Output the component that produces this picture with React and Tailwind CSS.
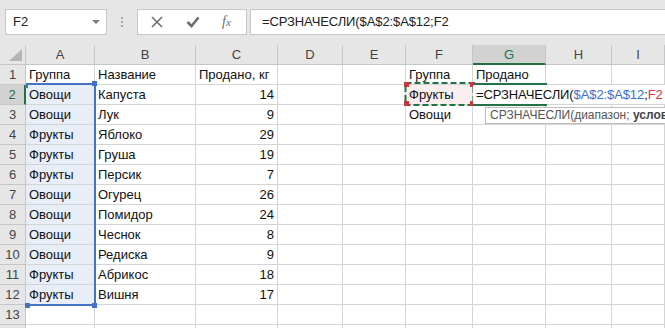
import React from 'react'

// column widths: row header, A..I
const COLS = 'grid-cols-[26px_69px_101px_82px_65px_63px_67px_73px_66px_53px]'
const LETTERS = ['A', 'B', 'C', 'D', 'E', 'F', 'G', 'H', 'I']

const rows = [
  ['Группа', 'Название', 'Продано, кг', '', '', 'Группа', 'Продано', '', ''],
  ['Овощи', 'Капуста', '14', '', '', 'Фрукты', '', '', ''],
  ['Овощи', 'Лук', '9', '', '', 'Овощи', '', '', ''],
  ['Фрукты', 'Яблоко', '29', '', '', '', '', '', ''],
  ['Фрукты', 'Груша', '19', '', '', '', '', '', ''],
  ['Фрукты', 'Персик', '7', '', '', '', '', '', ''],
  ['Овощи', 'Огурец', '26', '', '', '', '', '', ''],
  ['Овощи', 'Помидор', '24', '', '', '', '', '', ''],
  ['Овощи', 'Чеснок', '8', '', '', '', '', '', ''],
  ['Овощи', 'Редиска', '9', '', '', '', '', '', ''],
  ['Фрукты', 'Абрикос', '18', '', '', '', '', '', ''],
  ['Фрукты', 'Вишня', '17', '', '', '', '', '', ''],
  ['', '', '', '', '', '', '', '', ''],
  ['', '', '', '', '', '', '', '', ''],
]

const FormulaBar = () => (
  <div className="h-[45px] bg-[#e6e6e6] flex items-start pt-[9px]">
    <div className="ml-[5px] w-[102px] h-[26px] bg-white border border-[#c6c6c6] flex items-center pl-[7px] pr-[6px] text-[13px] text-[#222]">
      <span className="flex-1">F2</span>
      <div className="w-0 h-0 border-l-[4px] border-r-[4px] border-t-[4px] border-l-transparent border-r-transparent border-t-[#7a7a7a]" />
    </div>
    <div className="ml-[14px] mt-[8px] flex flex-col gap-[2px]">
      <div className="w-[2px] h-[2px] bg-[#a8a8a8]" />
      <div className="w-[2px] h-[2px] bg-[#a8a8a8]" />
      <div className="w-[2px] h-[2px] bg-[#a8a8a8]" />
    </div>
    <div className="ml-[14px] w-[110px] h-[26px] bg-white border border-[#c6c6c6] flex items-center">
      <svg width="12" height="12" viewBox="0 0 12 12" className="ml-[13px]">
        <path d="M1 1 L11 11 M11 1 L1 11" stroke="#6e6e6e" strokeWidth="1.6" fill="none" />
      </svg>
      <svg width="14" height="12" viewBox="0 0 14 12" className="ml-[23px]">
        <path d="M1.5 6 L5.5 10 L12.5 1.5" stroke="#6e6e6e" strokeWidth="2.6" fill="none" />
      </svg>
      <span className="ml-[22px] font-['Liberation_Serif',serif] italic text-[14px] text-[#6e6e6e] leading-none">
        f<span className="text-[11px]">x</span>
      </span>
    </div>
    <div className="ml-[3px] flex-1 -mr-[2px] h-[26px] bg-white border border-[#c6c6c6] flex items-center pl-[11px] text-[13px] text-[#222] tracking-[-0.1px] whitespace-nowrap">
      =СРЗНАЧЕСЛИ($A$2:$A$12;F2
    </div>
  </div>
)

const Cell = ({ value, col, row }) => {
  const isNum = col === 2 && row > 1 && value !== ''
  const inRange = col === 0 && row >= 2 && row <= 12
  const isF2 = col === 5 && row === 2
  let bg = 'bg-white'
  if (inRange) bg = 'bg-[#e8eef8]'
  if (isF2) bg = 'bg-[#fbeeee]'
  return (
    <div
      className={`${bg} border-r border-b border-[#d4d4d4] px-[3px] text-[13px] text-[#111] leading-[19px] whitespace-nowrap overflow-visible ${
        isNum ? 'text-right' : 'text-left'
      }`}
    >
      {value}
    </div>
  )
}

const Sheet = () => (
  <div className={`relative grid ${COLS} auto-rows-[20px]`}>
    {/* header row */}
    <div className="bg-[#e6e6e6] border-r border-b border-[#c6c6c6] relative">
      <svg width="13" height="12" viewBox="0 0 13 12" className="absolute right-[3px] bottom-[3px]">
        <path d="M13 0 L13 12 L0 12 Z" fill="#b4b4b4" />
      </svg>
    </div>
    {LETTERS.map((l) =>
      l === 'G' ? (
        <div
          key={l}
          className="bg-[#d2d2d2] border-r border-[#c6c6c6] border-b-2 border-b-[#217346] text-center text-[13px] text-[#217346] leading-[19px]"
        >
          {l}
        </div>
      ) : (
        <div
          key={l}
          className="bg-[#e6e6e6] border-r border-b border-[#c6c6c6] text-center text-[13px] text-[#444] leading-[19px]"
        >
          {l}
        </div>
      )
    )}

    {rows.map((r, i) => {
      const n = i + 1
      return (
        <React.Fragment key={n}>
          {n === 2 ? (
            <div className="bg-[#d2d2d2] border-r-2 border-r-[#217346] border-b border-b-[#c6c6c6] text-center text-[13px] text-[#217346] leading-[19px]">
              {n}
            </div>
          ) : (
            <div className="bg-[#e6e6e6] border-r border-b border-[#c6c6c6] text-center text-[13px] text-[#444] leading-[19px]">
              {n < 14 ? n : ''}
            </div>
          )}
          {r.map((v, c) => (
            <Cell key={c} value={v} col={c} row={n} />
          ))}
        </React.Fragment>
      )
    })}

    {/* A2:A12 reference range */}
    <div className="absolute left-[26px] top-[38px] w-[70px] h-[223px] border-t-2 border-r-2 border-b-2 border-[#4472c4]" />
    <div className="absolute left-[92px] top-[36px] w-[5px] h-[5px] bg-[#4472c4]" />
    <div className="absolute left-[92px] top-[258px] w-[5px] h-[5px] bg-[#4472c4]" />
    <div className="absolute left-[25px] top-[258px] w-[5px] h-[5px] bg-[#4472c4]" />
    <div className="absolute left-[25px] top-[40px] w-[3px] h-[3px] bg-[#4472c4]" />

    {/* F2 reference cell */}
    <svg width="72" height="24" viewBox="0 0 72 24" className="absolute left-[404px] top-[37px]">
      <rect x="1.5" y="1" width="68" height="22" fill="none" stroke="#217346" strokeWidth="2" strokeDasharray="6 3" />
      <rect x="0" y="0" width="5" height="5" fill="#c8373f" />
      <rect x="66" y="0" width="5" height="5" fill="#c8373f" />
      <rect x="0" y="19" width="5" height="5" fill="#c8373f" />
      <rect x="66" y="19" width="5" height="5" fill="#c8373f" />
    </svg>

    {/* G2 in edit mode */}
    <div className="absolute left-[473px] top-[38px] w-[192px] h-[23px]">
      <div className="absolute left-0 top-[2px] w-full h-[19px] bg-white" />
      <div className="absolute left-0 top-0 w-[74px] h-[23px] border-y-2 border-[#217346]" />
      <div className="absolute left-[3px] top-[2px] leading-[19px] text-[13px] text-[#111] whitespace-nowrap tracking-[-0.1px]">
        =СРЗНАЧЕСЛИ(<span className="text-[#3a6fc9]">$A$2:$A$12</span>;<span className="text-[#d0384a]">F2</span>
      </div>
    </div>

    {/* function tooltip */}
    <div className="absolute left-[485px] top-[62px] w-[200px] h-[17px] border border-[#bdbdbd] bg-white pl-[4px] text-[12px] leading-[15px] text-[#555] whitespace-nowrap">
      СРЗНАЧЕСЛИ(диапазон; <b className="text-[#444]">условие</b>
    </div>
  </div>
)

const App = () => (
  <div className="w-[665px] h-[328px] overflow-hidden bg-white font-['Liberation_Sans',Arial,sans-serif]">
    <FormulaBar />
    <Sheet />
  </div>
)

export default App
